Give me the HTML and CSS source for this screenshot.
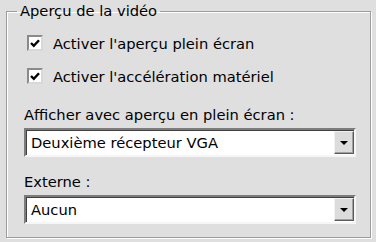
FILE: index.html
```html
<!DOCTYPE html>
<html lang="fr">
<head>
<meta charset="utf-8">
<link rel="stylesheet" href="styles.css">
</head>
<body>
<fieldset class="group">
  <legend class="group-title">Aperçu de la vidéo</legend>
  <div class="check-row">
    <span class="check"><svg viewBox="0 0 12 12" width="12" height="12"><path d="M2 6 L4.8 8.8 L10 3.2" fill="none" stroke="#000" stroke-width="2.4"/></svg></span>
    <span class="check-label">Activer l'aperçu plein écran</span>
  </div>
  <div class="check-row second">
    <span class="check"><svg viewBox="0 0 12 12" width="12" height="12"><path d="M2 6 L4.8 8.8 L10 3.2" fill="none" stroke="#000" stroke-width="2.4"/></svg></span>
    <span class="check-label">Activer l'accélération matériel</span>
  </div>
  <div class="field first-field">
    <div class="field-label">Afficher avec aperçu en plein écran :</div>
    <div class="combo">
      <span class="combo-value">Deuxième récepteur VGA</span>
      <span class="combo-btn"><span class="arrow"></span></span>
    </div>
  </div>
  <div class="field">
    <div class="field-label">Externe :</div>
    <div class="combo">
      <span class="combo-value">Aucun</span>
      <span class="combo-btn"><span class="arrow"></span></span>
    </div>
  </div>
</fieldset>
</body>
</html>
```
FILE: styles.css
```css
html, body {
  margin: 0;
  padding: 0;
}
body {
  width: 376px;
  height: 242px;
  background: #dfdfdf;
  font-family: "DejaVu Sans", Verdana, sans-serif;
  font-size: 14.7px;
  color: #000;
  padding: 2px 0 0 6px;
  box-sizing: border-box;
  overflow: hidden;
}
.group {
  box-sizing: border-box;
  width: 365px;
  height: 236px;
  margin: 0;
  padding: 0 0 0 17px;
  border: 1px solid #9c9c9c;
  box-shadow: inset 1px 1px 0 #fff, 1px 1px 0 #fff;
}
.group-title {
  margin-left: -7px;
  padding: 0 3px;
  line-height: 18px;
}
.check-row {
  display: flex;
  align-items: center;
  gap: 10px;
  height: 18px;
  margin-left: 3px;
  margin-top: 14px;
}
.check-row.second {
  margin-top: 15px;
}
.check {
  box-sizing: border-box;
  width: 16px;
  height: 16px;
  background: #fff;
  border: 2px solid #8a8a8a;
  border-right-color: #d8d8d8;
  border-bottom-color: #d8d8d8;
  display: flex;
  align-items: center;
  justify-content: center;
}
.check svg {
  display: block;
}
.field {
  margin-top: 16px;
}
.first-field {
  margin-top: 21px;
}
.field-label {
  line-height: 18px;
  margin-bottom: 4px;
}
.combo {
  box-sizing: border-box;
  width: 332px;
  height: 29px;
  background: #fff;
  border: 2px solid;
  border-color: #7c7c7c #f6f6f6 #f6f6f6 #7c7c7c;
  box-shadow: inset 1px 1px 0 #404040;
  display: flex;
  align-items: center;
  padding: 1px 0 1px 5px;
}
.combo-value {
  flex: 1;
}
.combo-btn {
  box-sizing: border-box;
  width: 20px;
  height: 100%;
  background: #dcdcdc;
  border: 1px solid;
  border-color: #f2f2f2 #5a5a5a #5a5a5a #f2f2f2;
  box-shadow: inset -1px -1px 0 #a0a0a0;
  display: flex;
  align-items: center;
  justify-content: center;
}
.arrow {
  width: 0;
  height: 0;
  border-left: 4px solid transparent;
  border-right: 4px solid transparent;
  border-top: 4px solid #000;
}
```
